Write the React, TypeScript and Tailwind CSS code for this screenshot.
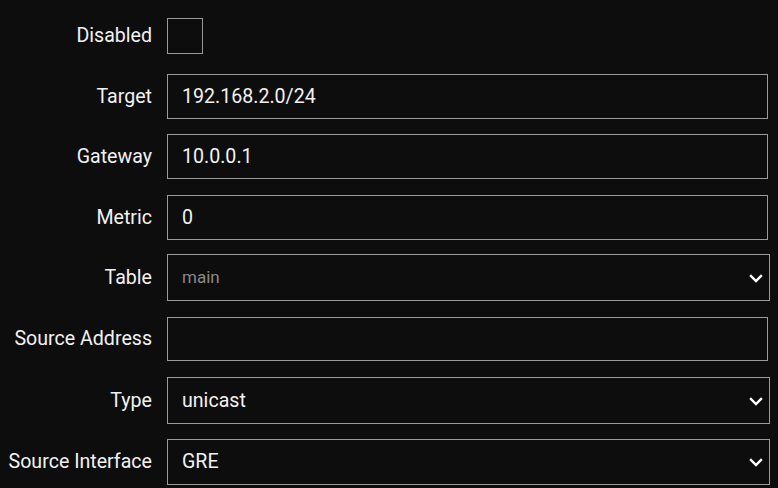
import React from 'react'

const font = { fontFamily: 'Roboto, "Noto Sans", sans-serif' }

function Chevron() {
  return (
    <svg width="14" height="10" viewBox="0 0 14 10" className="absolute right-[6px] top-1/2 -translate-y-1/2">
      <path d="M2 3 L7 8 L12 3" fill="none" stroke="#fff" strokeWidth="2.4" strokeLinecap="square" />
    </svg>
  )
}

function Row({ label, mt, h, children }: { label: string; mt: string; h: string; children: React.ReactNode }) {
  return (
    <div className={`flex items-center ${mt} ${h}`}>
      <div className="w-[152px] text-right text-[19.6px] text-[#f2f2f2]">{label}</div>
      <div className="ml-[15px] flex-1 h-full">{children}</div>
    </div>
  )
}

function TextBox({ value }: { value: string }) {
  return (
    <div className="h-full w-[601px] border border-[#9a9a9a] flex items-center pl-[14px] text-[19.6px] text-[#f2f2f2]">
      {value}
    </div>
  )
}

function SelectBox({ value, muted }: { value: string; muted?: boolean }) {
  return (
    <div className="relative h-full w-[603px] border border-[#9a9a9a] flex items-center pl-[14px]">
      <span className={muted ? 'text-[17px] text-[#8a8a8a]' : 'text-[19.6px] text-[#f2f2f2]'}>{value}</span>
      <Chevron />
    </div>
  )
}

export default function App() {
  return (
    <div className="w-[778px] h-[488px] bg-[#0d0d0d] overflow-hidden" style={font}>
      <Row label="Disabled" mt="mt-[18px]" h="h-[36px]">
        <div className="w-[36px] h-[36px] border border-[#9a9a9a]" />
      </Row>
      <Row label="Target" mt="mt-[20px]" h="h-[45px]">
        <TextBox value="192.168.2.0/24" />
      </Row>
      <Row label="Gateway" mt="mt-[15px]" h="h-[45px]">
        <TextBox value="10.0.0.1" />
      </Row>
      <Row label="Metric" mt="mt-[16px]" h="h-[45px]">
        <TextBox value="0" />
      </Row>
      <Row label="Table" mt="mt-[14px]" h="h-[47px]">
        <SelectBox value="main" muted />
      </Row>
      <Row label="Source Address" mt="mt-[16px]" h="h-[44px]">
        <TextBox value="" />
      </Row>
      <Row label="Type" mt="mt-[16px]" h="h-[47px]">
        <SelectBox value="unicast" />
      </Row>
      <Row label="Source Interface" mt="mt-[15px]" h="h-[46px]">
        <SelectBox value="GRE" />
      </Row>
    </div>
  )
}
